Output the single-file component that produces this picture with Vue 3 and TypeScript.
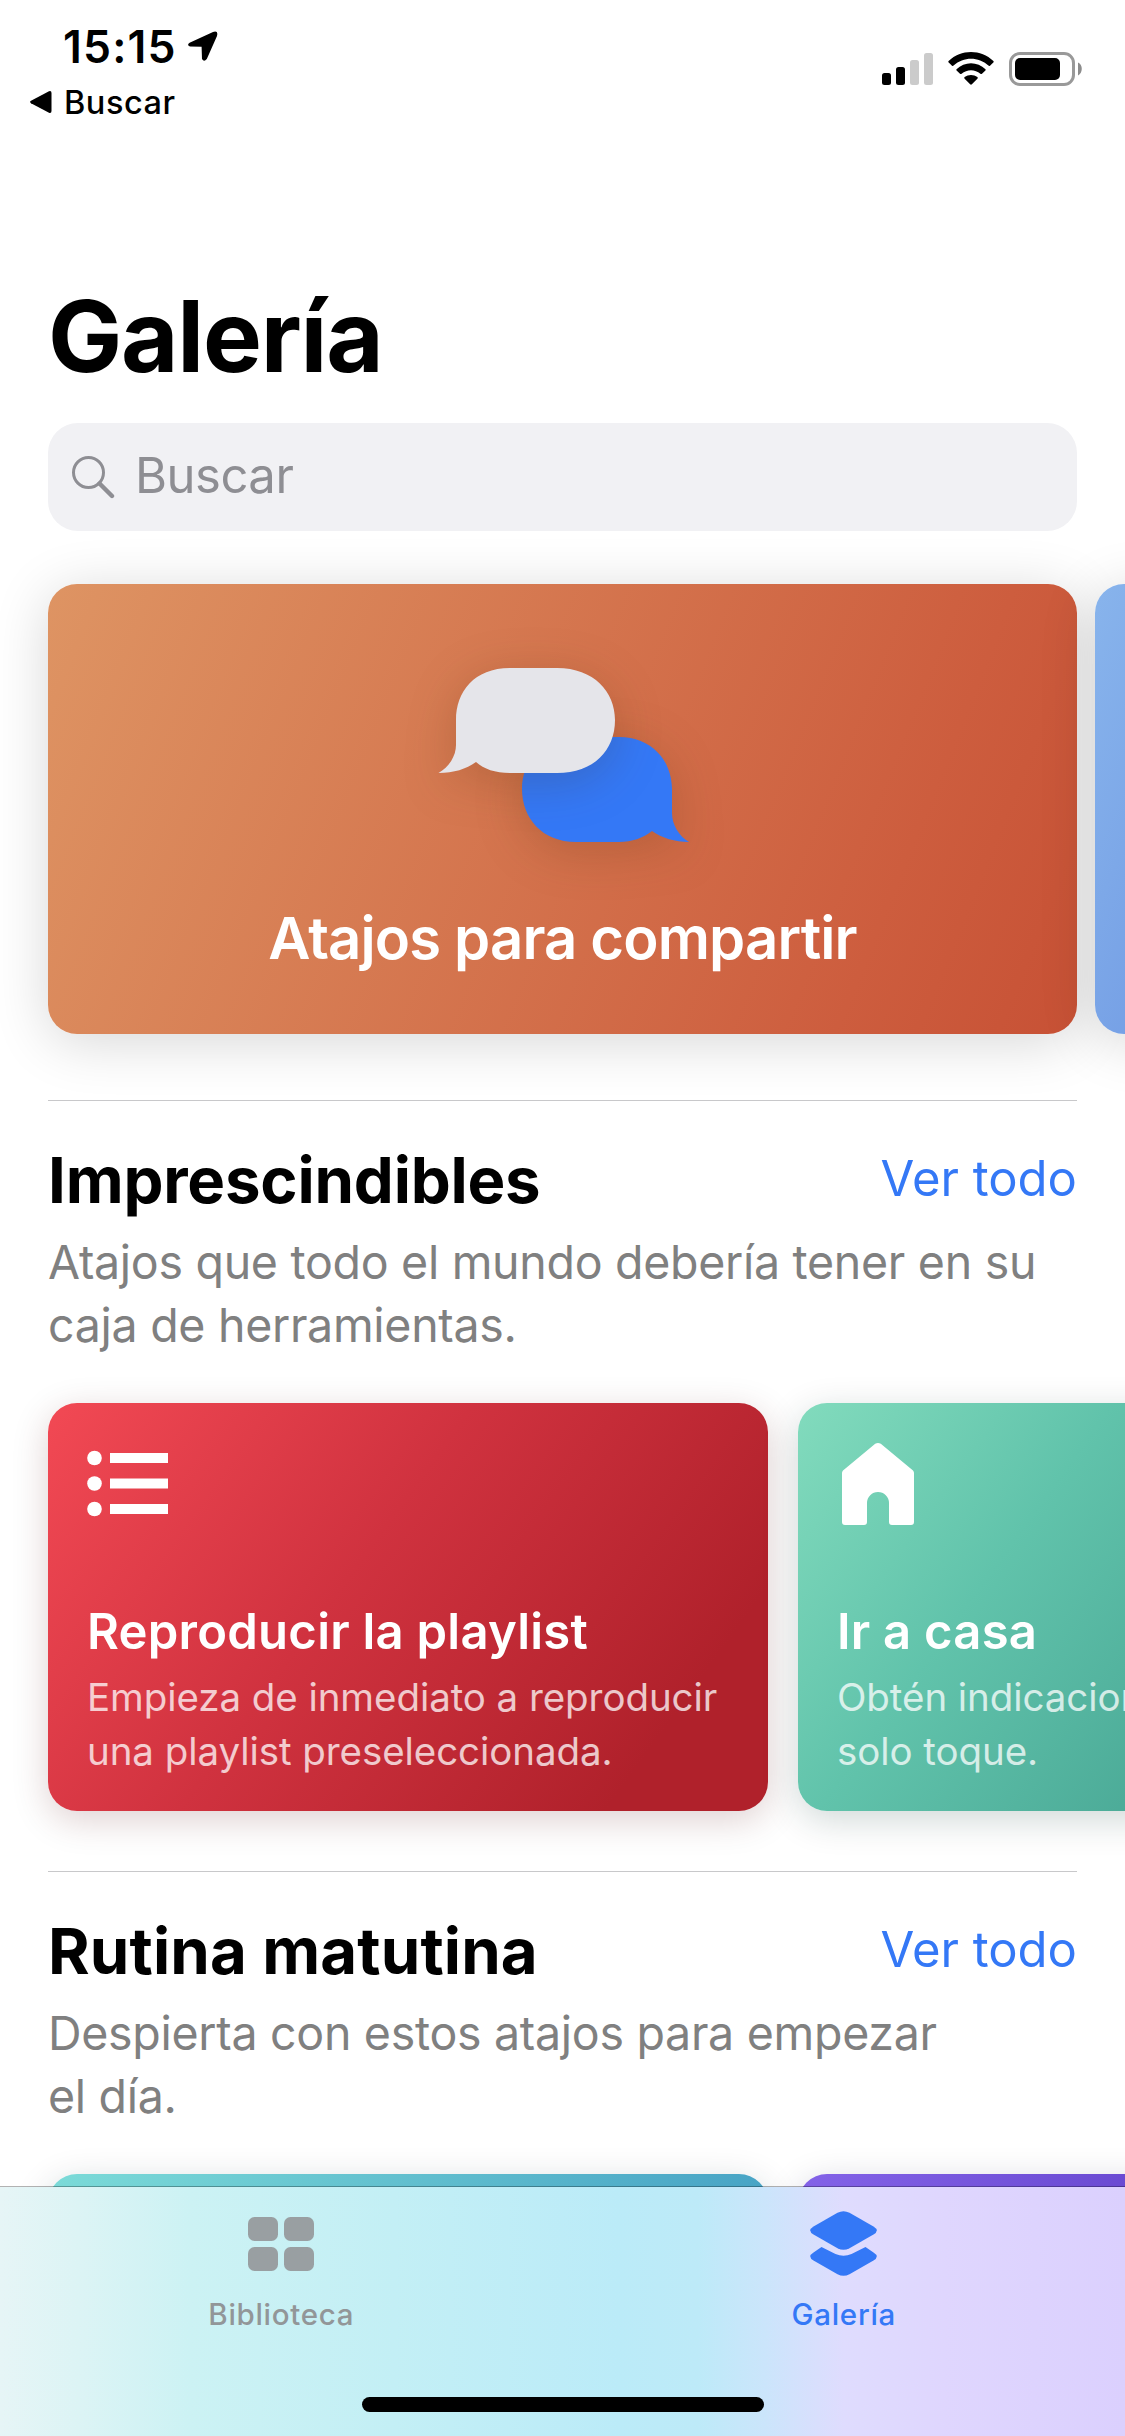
<script setup lang="ts">
interface ShortcutCard {
  icon: 'list' | 'house' | 'none'
  tone: string
  title: string
  lines: string[]
}
interface Section {
  title: string
  titleClass: string
  lines: string[]
  cards: ShortcutCard[]
}

const sections: Section[] = [
  {
    title: 'Imprescindibles',
    titleClass: 'essentials',
    lines: ['Atajos que todo el mundo debería tener en su', 'caja de herramientas.'],
    cards: [
      {
        icon: 'list',
        tone: 'red',
        title: 'Reproducir la playlist',
        lines: ['Empieza de inmediato a reproducir', 'una playlist preseleccionada.'],
      },
      {
        icon: 'house',
        tone: 'green',
        title: 'Ir a casa',
        lines: ['Obtén indicaciones con un', 'solo toque.'],
      },
    ],
  },
  {
    title: 'Rutina matutina',
    titleClass: 'morning',
    lines: ['Despierta con estos atajos para empezar', 'el día.'],
    cards: [
      { icon: 'none', tone: 'teal', title: '', lines: [] },
      { icon: 'none', tone: 'purple', title: '', lines: [] },
    ],
  },
]
</script>

<template>
  <div class="screen">
    <header class="status">
      <div class="status-left">
        <div class="time-row">
          <span class="time">15:15</span>
          <svg class="location" width="32" height="31" viewBox="0 0 32 31">
            <path d="M2.600 11.800 L26 1 Q31.500 -.8 30 5 L19.800 28 Q17 31.500 15 28 L14.600 15.800 L3 15.400 Q-.6 14 2.600 11.800Z" />
          </svg>
        </div>
        <div class="back-row">
          <svg width="22" height="24" viewBox="0 0 22 24">
            <path d="M1 10.800 L19 1.200 Q21.500 .4 21.500 3 V21 Q21.500 23.600 19 22.800 L1 13.200 Q-.8 12 1 10.800Z" />
          </svg>
          <span class="back">Buscar</span>
        </div>
      </div>
      <div class="status-right">
        <svg width="51" height="32" viewBox="0 0 51 32">
          <rect x="0" y="20" width="9" height="12" rx="2.500" />
          <rect x="14" y="14" width="9" height="18" rx="2.500" />
          <rect x="28" y="7" width="9" height="25" rx="2.500" fill="#cbcbcb" />
          <rect x="42" y="0" width="9" height="32" rx="2.500" fill="#cbcbcb" />
        </svg>
        <svg class="wifi" width="46" height="33" viewBox="0 0 46 33">
          <path d="M.6 9 C13 -3 33 -3 45.400 9 Q46 9.800 45.300 10.500 L42 13.700 Q41.200 14.300 40.400 13.600 C30.500 4.500 15.500 4.500 5.600 13.600 Q4.800 14.300 4 13.700 L.7 10.500 Q0 9.800 .6 9Z" />
          <path d="M8.500 17.300 C16.500 9.300 29.500 9.300 37.500 17.300 Q38 18 37.400 18.600 L34 21.800 Q33.200 22.400 32.400 21.700 C27 17 19 17 13.600 21.700 Q12.800 22.400 12 21.800 L8.600 18.600 Q8 18 8.500 17.300Z" />
          <path d="M16.600 25 C20.200 22.200 25.800 22.200 29.400 25 Q30.200 25.800 29.400 26.700 L23.900 32.300 Q23 33 22.100 32.300 L16.600 26.700 Q15.800 25.800 16.600 25Z" />
        </svg>
        <svg class="battery" width="74" height="34" viewBox="0 0 74 34">
          <rect x="1.500" y="1.500" width="63" height="31" rx="9.500" fill="none" stroke="#999" stroke-width="3" />
          <rect x="6" y="6" width="45" height="22" rx="5" />
          <path d="M69 10.500 C74 12.500 74 21 69 23.500Z" fill="#8c8c8c" />
        </svg>
      </div>
    </header>

    <h1 class="page-title">Galería</h1>

    <div class="search">
      <svg width="43" height="43" viewBox="0 0 43 43" fill="none" stroke="#8e8e93">
        <circle cx="16.500" cy="16.500" r="15" stroke-width="3" />
        <path d="M27.500 27.500 L40 40" stroke-width="4.400" stroke-linecap="round" />
      </svg>
      <span>Buscar</span>
    </div>

    <div class="hero-row">
      <article class="hero">
        <svg class="bubbles" width="252" height="175" viewBox="0 0 252 175">
          <path class="bubble" fill="#3478f6" d="M84 121 C84 93 104 69 140 69 H181 C213 69 234 92 234 121 V145 C234 157 241 168 251 174 C237 174 224 170 214 163 C205 170 194 174 181 174 H138 C104 174 84 150 84 121Z" />
          <path class="bubble" fill="#e5e5ea" d="M18 52 C18 24 36 0 72 0 H119 C156 0 177 24 177 52 C177 82 156 105 119 105 H72 C57 105 46 101 38 94 C28 101 16 105 .5 105 C11 99 18 88 18 77Z" />
        </svg>
        <h2>Atajos para compartir</h2>
      </article>
      <article class="hero next"></article>
    </div>

    <section v-for="s in sections" :key="s.title" class="section">
      <div class="section-head">
        <h3 :class="s.titleClass">{{ s.title }}</h3>
        <a>Ver todo</a>
      </div>
      <p class="section-desc">
        <span v-for="l in s.lines" :key="l">{{ l }}</span>
      </p>
      <div class="cards">
        <article v-for="c in s.cards" :key="c.tone" class="card" :class="c.tone">
          <svg v-if="c.icon === 'list'" class="glyph" width="84" height="84" viewBox="0 0 84 84" fill="#fff">
            <circle cx="7.500" cy="15" r="7.300" />
            <circle cx="7.500" cy="40.500" r="7.300" />
            <circle cx="7.500" cy="66" r="7.300" />
            <rect x="23" y="10" width="58" height="10" />
            <rect x="23" y="35.500" width="58" height="10" />
            <rect x="23" y="61" width="58" height="10" />
          </svg>
          <svg v-else-if="c.icon === 'house'" class="glyph" width="84" height="84" viewBox="0 0 84 84" fill="#fff">
            <path d="M38.200 .8 Q41 -.8 43.800 .8 L76 27.500 Q77 28.500 77 30 V79 Q77 82 74 82 H55 Q52 82 52 79 V60 A11 11 0 0 0 30 60 V79 Q30 82 27 82 H8 Q5 82 5 79 V30 Q5 28.500 6 27.500Z" />
          </svg>
          <h4 v-if="c.title">{{ c.title }}</h4>
          <p v-if="c.lines.length">
            <span v-for="l in c.lines" :key="l">{{ l }}</span>
          </p>
        </article>
      </div>
    </section>

    <nav class="tabs">
      <div class="tab">
        <svg width="66" height="66" viewBox="0 0 66 66" fill="#999fa2">
          <rect x="0" y="6" width="30" height="24" rx="6.500" />
          <rect x="36" y="6" width="30" height="24" rx="6.500" />
          <rect x="0" y="36" width="30" height="24" rx="6.500" />
          <rect x="36" y="36" width="30" height="24" rx="6.500" />
        </svg>
        <span>Biblioteca</span>
      </div>
      <div class="tab active">
        <svg width="67" height="66" viewBox="0 0 67 66" fill="#3478f6">
          <path d="M27.500 1.800 Q33.500 -1.200 39.500 1.800 L63.500 15.500 Q70 19.500 63.500 23.500 L39.500 37.200 Q33.500 40.200 27.500 37.200 L3.500 23.500 Q-3 19.500 3.500 15.500Z" />
          <path d="M11.500 36 L25.500 43 Q33.500 46.500 41.500 43 L55.500 36 L63.500 41.500 Q70 45.500 63.500 49.500 L39.500 63.200 Q33.500 66.200 27.500 63.200 L3.500 49.500 Q-3 45.500 3.500 41.500Z" />
        </svg>
        <span>Galería</span>
      </div>
      <div class="home-indicator"></div>
    </nav>
  </div>
</template>

<style>
body {
  margin: 0;
  background: #fff;
}
</style>

<style scoped>
.screen {
  position: relative;
  width: 1125px;
  height: 2436px;
  overflow: hidden;
  background: #fff;
  color: #000;
  font-family: Inter, 'Liberation Sans', sans-serif;
  white-space: nowrap;
}
h1, h2, h3, h4, p {
  margin: 0;
}
svg {
  display: block;
  flex: none;
}
.status {
  box-sizing: border-box;
  height: 276px;
  display: flex;
  justify-content: space-between;
  padding: 23px 42px 0 30px;
}
.time-row {
  display: flex;
  align-items: flex-start;
  padding-left: 33px;
  height: 48px;
}
.time {
  width: 124px;
  font-size: 44.500px;
  line-height: 48px;
  font-weight: 600;
  letter-spacing: 1.200px;
}
.location {
  margin-top: 8px;
}
.back-row {
  display: flex;
  align-items: center;
  gap: 12px;
  height: 40px;
  margin-top: 12px;
}
.back-row svg {
  margin-top: -3px;
}
.back {
  font-size: 32.500px;
  line-height: 40px;
  font-weight: 500;
  letter-spacing: .5px;
}
.status-right {
  display: flex;
  align-items: flex-start;
  padding-top: 29px;
}
.status-right > svg:first-child {
  margin-top: 1px;
}
.wifi {
  margin-left: 15px;
}
.battery {
  margin-left: 15px;
}
.page-title {
  padding-left: 48px;
  height: 120px;
  font-size: 99px;
  line-height: 120px;
  font-weight: 700;
  letter-spacing: -1.200px;
}
.search {
  box-sizing: border-box;
  height: 108px;
  margin: 27px 48px 0;
  padding-left: 24px;
  display: flex;
  align-items: center;
  gap: 20px;
  border-radius: 30px;
  background: #f1f1f4;
  color: #8e8e93;
  font-size: 49px;
  line-height: 60px;
  letter-spacing: -.5px;
}
.search span {
  margin-top: -2px;
}
.hero-row {
  display: flex;
  gap: 18px;
  margin-top: 53px;
  padding-left: 48px;
}
.hero {
  flex: none;
  box-sizing: border-box;
  width: 1029px;
  height: 450px;
  padding-top: 84px;
  display: flex;
  flex-direction: column;
  align-items: center;
  border-radius: 29px;
  background: linear-gradient(112deg, #de9463 0%, #cd5d3e 80%, #c75135 100%);
  box-shadow: 0 8px 56px rgba(0, 0, 0, .16);
}
.hero.next {
  background: linear-gradient(112deg, #88b4ec 0%, #5b83dc 45%);
}
.bubbles {
  overflow: visible;
  margin-left: 3px;
}
.bubble {
  filter: drop-shadow(0 9px 24px rgba(70, 40, 0, .2));
}
.hero h2 {
  margin-top: 60px;
  color: #fff;
  font-size: 58px;
  line-height: 70px;
  font-weight: 600;
  letter-spacing: -.85px;
}
.section {
  margin: 0 48px;
  border-top: 1px solid #c8c8ca;
  padding-top: 41px;
}
.hero-row + .section {
  margin-top: 66px;
}
.section + .section {
  margin-top: 60px;
}
.section-head {
  display: flex;
  justify-content: space-between;
  height: 76px;
}
h3 {
  font-size: 63.500px;
  line-height: 76px;
  font-weight: 700;
}
h3.essentials {
  letter-spacing: -.2px;
}
h3.morning {
  letter-spacing: .15px;
}
.section-head a {
  margin-top: 7px;
  color: #3478f6;
  font-size: 49px;
  line-height: 60px;
}
.section-desc {
  margin-top: 13px;
  color: #808080;
  font-size: 46.500px;
  line-height: 63px;
  letter-spacing: -.29px;
}
.section-desc span,
.card p span {
  display: block;
}
.cards {
  display: flex;
  gap: 30px;
  margin-top: 46px;
}
.card {
  flex: none;
  box-sizing: border-box;
  width: 720px;
  height: 408px;
  padding: 40px 39px 0;
  border-radius: 29px;
  color: #fff;
}
.red {
  background: linear-gradient(126deg, #f24954 0%, #d0323f 42%, #b0212b 84%);
  box-shadow: 0 9px 36px rgba(80, 0, 8, .19);
}
.green {
  background: linear-gradient(126deg, #82dbbd 0%, #61c3ab 31%, #4cab98 62%, #3f9a8b 82%);
  box-shadow: 0 9px 36px rgba(0, 50, 40, .19);
}
.teal {
  background: linear-gradient(126deg, #7cdbd8 0%, #44a0c4 76%, #3c94bd 100%);
  box-shadow: 0 9px 36px rgba(0, 40, 50, .19);
}
.purple {
  background: linear-gradient(126deg, #8463e8 0%, #6848d0 36%, #4c2eb0 82%);
  box-shadow: 0 9px 36px rgba(20, 0, 60, .19);
}
.glyph {
  margin-bottom: 75px;
}
.card h4 {
  font-size: 49px;
  line-height: 60px;
  font-weight: 600;
  letter-spacing: .24px;
}
.card p {
  margin-top: 8px;
  color: rgba(255, 255, 255, .75);
  font-size: 38.500px;
  line-height: 54px;
  letter-spacing: -.07px;
}
.tabs {
  position: absolute;
  left: 0;
  bottom: 0;
  box-sizing: border-box;
  width: 1125px;
  height: 250px;
  padding-top: 24px;
  display: flex;
  border-top: 1px solid rgba(0, 0, 0, .3);
  background: linear-gradient(90deg, #e6f5f6 0%, #dcf4f5 7%, #ccf2f4 17%, #c3eff5 35%, #bbebf8 55%, #bdeaf8 62%, #cbe5fb 68%, #dfdcfe 75%, #dfd6fe 84%, #dbd0fe 100%) padding-box;
}
.tab {
  width: 562.500px;
  display: flex;
  flex-direction: column;
  align-items: center;
}
.tab span {
  margin-top: 16.500px;
  color: #929698;
  font-size: 29.500px;
  line-height: 40px;
  font-weight: 500;
  letter-spacing: .7px;
}
.tab.active span {
  color: #3478f6;
}
.home-indicator {
  position: absolute;
  left: 362px;
  bottom: 24px;
  width: 402px;
  height: 15px;
  border-radius: 8px;
  background: #000;
}
</style>
